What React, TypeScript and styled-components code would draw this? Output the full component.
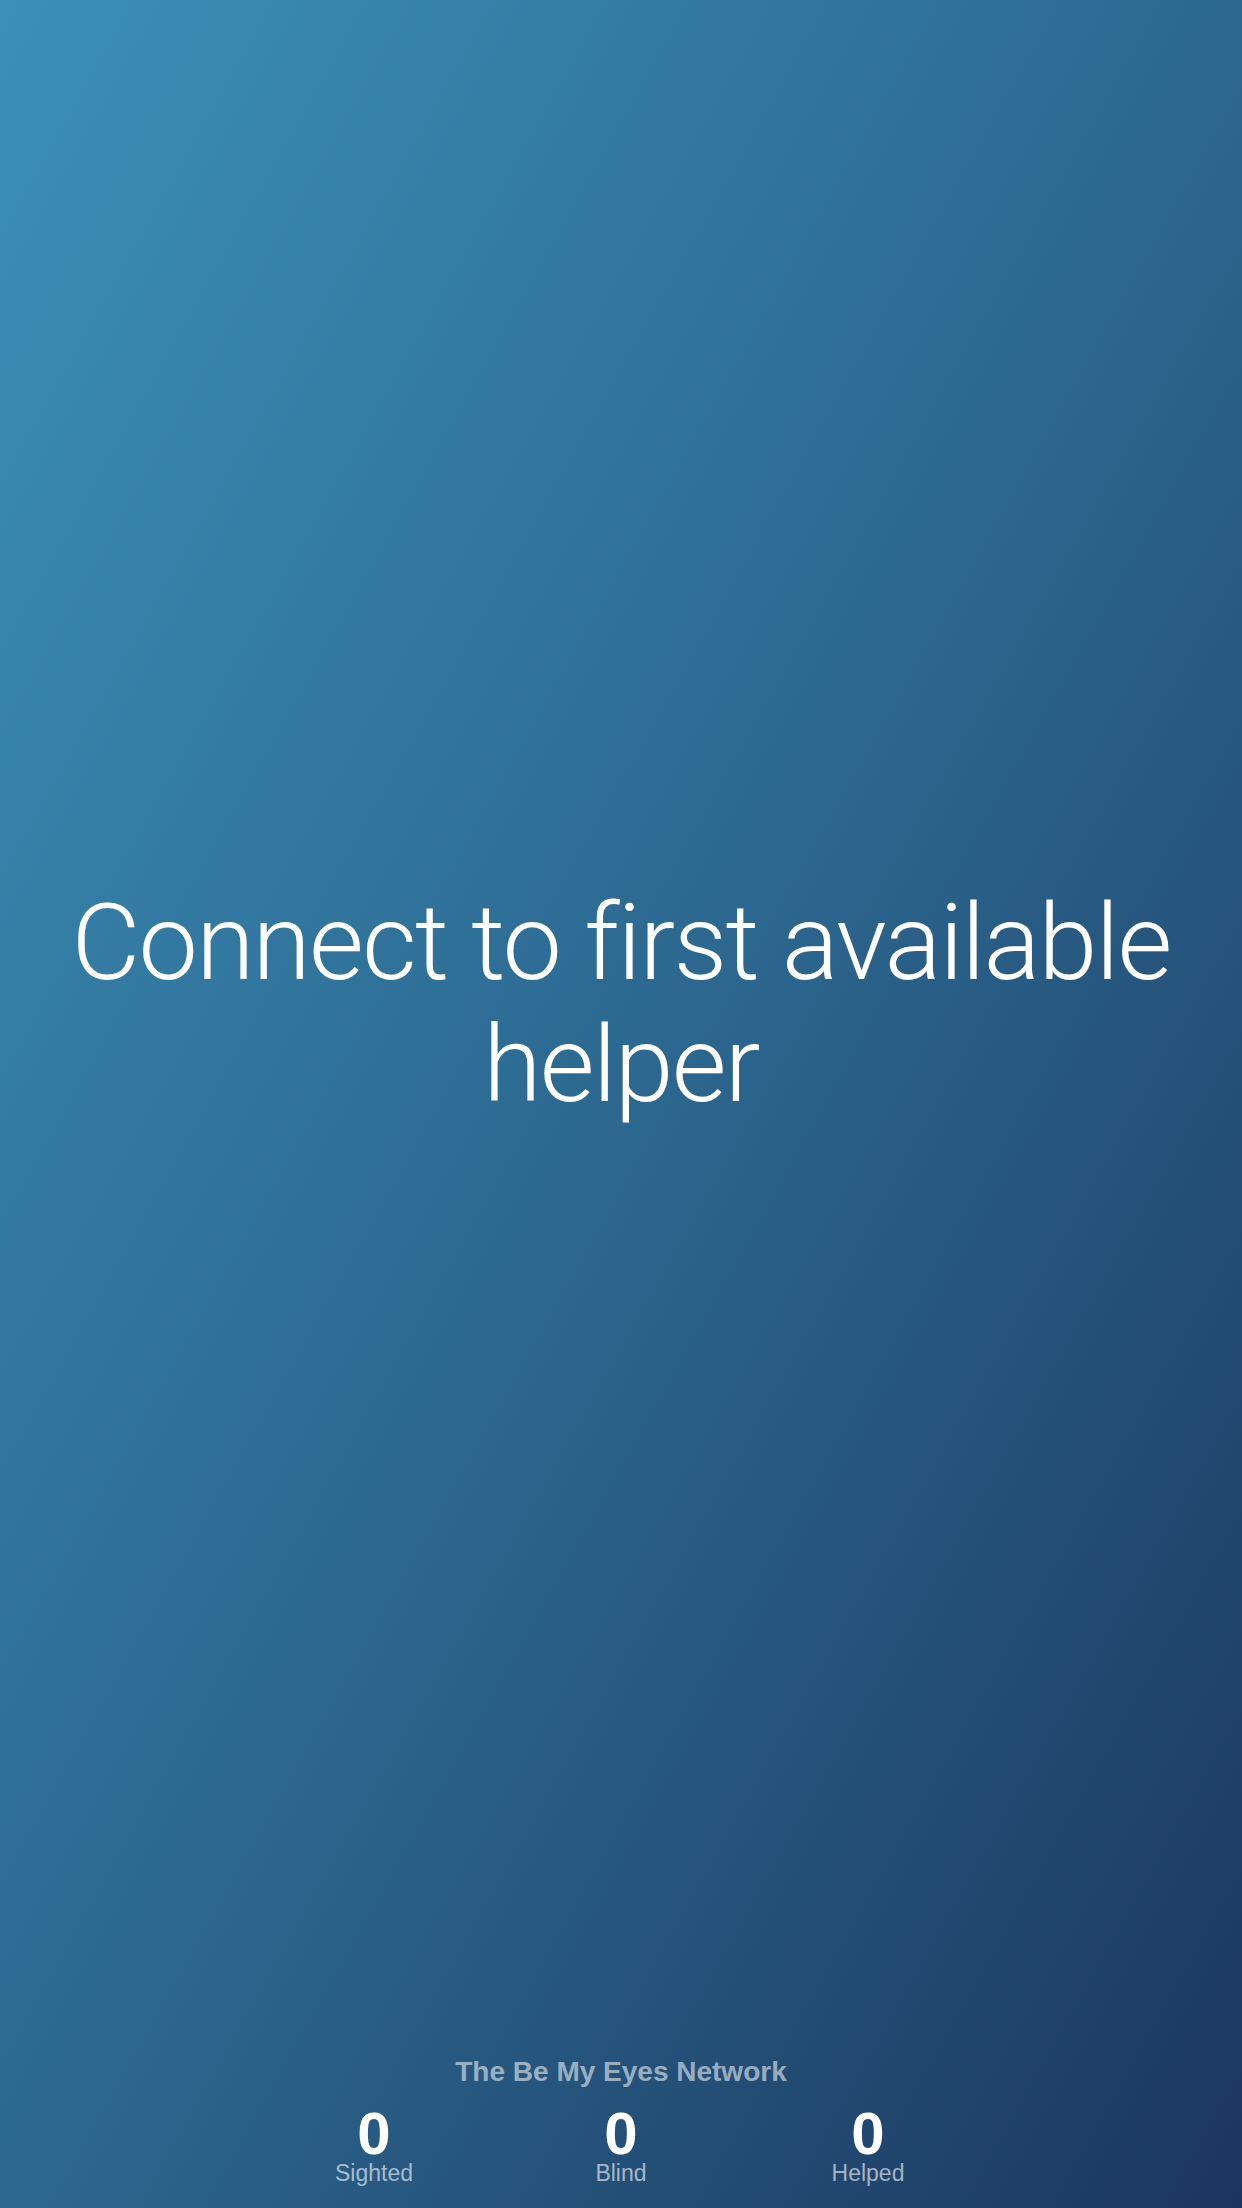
import React from "react";
import styled, { createGlobalStyle } from "styled-components";

const GlobalStyle = createGlobalStyle`
  html, body {
    margin: 0;
    padding: 0;
    width: 1242px;
    height: 2208px;
    overflow: hidden;
  }
  body {
    font-family: "Roboto", "Liberation Sans", Arial, sans-serif;
    -webkit-font-smoothing: antialiased;
  }
`;

const Screen = styled.main`
  width: 1242px;
  height: 2208px;
  display: flex;
  flex-direction: column;
  background: linear-gradient(to bottom right, #3b90b8 0%, #2c6890 50%, #1b365e 100%);
  color: #ffffff;
`;

const Stage = styled.section`
  flex: 1;
  display: flex;
  align-items: center;
  justify-content: center;
  padding: 0 40px 48px;
`;

const Headline = styled.h1`
  margin: 0;
  font-family: "Roboto", "Liberation Sans", Arial, sans-serif;
  font-weight: 300;
  font-size: 106px;
  line-height: 122px;
  text-align: center;
  letter-spacing: -1.8px;
  color: #ffffff;
`;

const Footer = styled.footer`
  display: flex;
  flex-direction: column;
  align-items: center;
  padding-bottom: 22px;
`;

const NetworkTitle = styled.h2`
  margin: 0 0 22px;
  font-family: "Liberation Sans", Arial, sans-serif;
  font-weight: 700;
  font-size: 28px;
  line-height: 32px;
  color: rgba(255, 255, 255, 0.55);
`;

const Stats = styled.div`
  display: grid;
  grid-template-columns: repeat(3, 247px);
`;

const Stat = styled.div`
  display: flex;
  flex-direction: column;
  align-items: center;
`;

const Count = styled.span`
  font-family: "Liberation Sans", Arial, sans-serif;
  font-weight: 700;
  font-size: 60px;
  line-height: 48px;
  color: #ffffff;
`;

const Label = styled.span`
  margin-top: 3px;
  font-family: "Liberation Sans", Arial, sans-serif;
  font-weight: 400;
  font-size: 23px;
  line-height: 25px;
  color: rgba(255, 255, 255, 0.6);
`;

const stats = [
  { label: "Sighted", value: 0 },
  { label: "Blind", value: 0 },
  { label: "Helped", value: 0 },
];

export default function App() {
  return (
    <>
      <GlobalStyle />
      <Screen>
        <Stage>
          <Headline>
            Connect to first available
            <br />
            helper
          </Headline>
        </Stage>
        <Footer>
          <NetworkTitle>The Be My Eyes Network</NetworkTitle>
          <Stats>
            {stats.map((s) => (
              <Stat key={s.label}>
                <Count>{s.value}</Count>
                <Label>{s.label}</Label>
              </Stat>
            ))}
          </Stats>
        </Footer>
      </Screen>
    </>
  );
}
